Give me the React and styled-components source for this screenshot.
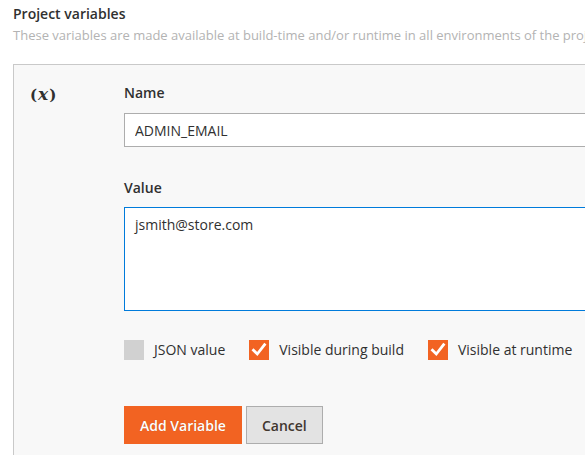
import React, { useState } from "react";
import styled, { createGlobalStyle } from "styled-components";

const GlobalStyle = createGlobalStyle`
  html, body {
    margin: 0;
    padding: 0;
    background: #ffffff;
    overflow: hidden;
  }
  body {
    font-family: "Open Sans", "Liberation Sans", sans-serif;
    font-size: 14px;
    color: #303030;
  }
`;

const Page = styled.div`
  width: 700px;
  padding: 4px 0 0 13px;
`;

const Title = styled.h2`
  margin: 0;
  font-size: 14px;
  line-height: 20px;
  font-weight: 600;
  color: #303030;
`;

const Subtitle = styled.p`
  margin: 1px 0 0;
  font-size: 13px;
  line-height: 20px;
  color: #b3b3b3;
  white-space: nowrap;
`;

const Panel = styled.section`
  margin-top: 19px;
  border: 1px solid #c9c9c9;
  background: #f8f8f8;
  display: grid;
  grid-template-columns: 110px 1fr;
  padding: 18px 0 40px;
`;

const VarIcon = styled.div`
  padding: 2px 0 0 16px;
  font-family: "DejaVu Serif", "Liberation Serif", serif;
  font-weight: 700;
  font-size: 15px;
  line-height: 18px;
  color: #303030;
  white-space: nowrap;

  i {
    font-size: 17px;
    margin: 0 1px;
  }
`;

const Fields = styled.div`
  display: flex;
  flex-direction: column;
`;

const Label = styled.label`
  display: block;
  font-weight: 600;
  line-height: 20px;
  margin-bottom: ${({ $gap }) => $gap}px;
`;

const TextInput = styled.input`
  box-sizing: border-box;
  height: 34px;
  width: 100%;
  padding: 0 10px;
  border: 1px solid #adadad;
  background: #fff;
  font: inherit;
  color: #303030;
  outline: none;
`;

const TextArea = styled.textarea`
  box-sizing: border-box;
  height: 104px;
  width: 100%;
  padding: 7px 10px;
  border: 1px solid #007bdb;
  background: #fff;
  font: inherit;
  line-height: 20px;
  color: #303030;
  resize: none;
  outline: none;
`;

const Spacer = styled.div`
  height: ${({ $h }) => $h}px;
`;

const Options = styled.div`
  display: flex;
  align-items: center;
  gap: 24px;
`;

const Option = styled.label`
  display: flex;
  align-items: center;
  gap: 10px;
  cursor: pointer;
  line-height: 20px;
`;

const Box = styled.span`
  width: 20px;
  height: 20px;
  display: flex;
  align-items: center;
  justify-content: center;
  background: ${({ $checked }) => ($checked ? "#f26322" : "#d1d1d1")};
`;

const Buttons = styled.div`
  display: flex;
  gap: 4px;
`;

const Button = styled.button`
  box-sizing: border-box;
  height: 38px;
  padding: 0 15px;
  font: inherit;
  font-weight: 600;
  border: 1px solid ${({ $primary }) => ($primary ? "#f26322" : "#adadad")};
  background: ${({ $primary }) => ($primary ? "#f26322" : "#e3e3e3")};
  color: ${({ $primary }) => ($primary ? "#ffffff" : "#41362f")};
  text-shadow: ${({ $primary }) => ($primary ? "0 0 1px rgba(0,0,0,0.25)" : "none")};
  cursor: pointer;
`;

function Check({ checked, label, onToggle }) {
  return (
    <Option onClick={onToggle}>
      <Box $checked={checked}>
        {checked && (
          <svg width="16" height="16" viewBox="0 0 16 16">
            <path
              d="M2.5 8.2 L6.3 12 L13.5 2.8"
              fill="none"
              stroke="#fff"
              strokeWidth="2.8"
              strokeLinecap="square"
            />
          </svg>
        )}
      </Box>
      {label}
    </Option>
  );
}

export default function App() {
  const [name, setName] = useState("ADMIN_EMAIL");
  const [value, setValue] = useState("jsmith@store.com");
  const [flags, setFlags] = useState({ json: false, build: true, runtime: true });

  const toggle = (key) => setFlags((f) => ({ ...f, [key]: !f[key] }));

  return (
    <Page>
      <GlobalStyle />
      <Title>Project variables</Title>
      <Subtitle>
        These variables are made available at build-time and/or runtime in all
        environments of the project.
      </Subtitle>
      <Panel>
        <VarIcon>
          (<i>x</i>)
        </VarIcon>
        <Fields>
          <Label $gap={10}>Name</Label>
          <TextInput value={name} onChange={(e) => setName(e.target.value)} />
          <Spacer $h={31} />
          <Label $gap={9}>Value</Label>
          <TextArea value={value} onChange={(e) => setValue(e.target.value)} />
          <Spacer $h={29} />
          <Options>
            <Check checked={flags.json} label="JSON value" onToggle={() => toggle("json")} />
            <Check checked={flags.build} label="Visible during build" onToggle={() => toggle("build")} />
            <Check checked={flags.runtime} label="Visible at runtime" onToggle={() => toggle("runtime")} />
          </Options>
          <Spacer $h={46} />
          <Buttons>
            <Button $primary>Add Variable</Button>
            <Button>Cancel</Button>
          </Buttons>
        </Fields>
      </Panel>
    </Page>
  );
}
